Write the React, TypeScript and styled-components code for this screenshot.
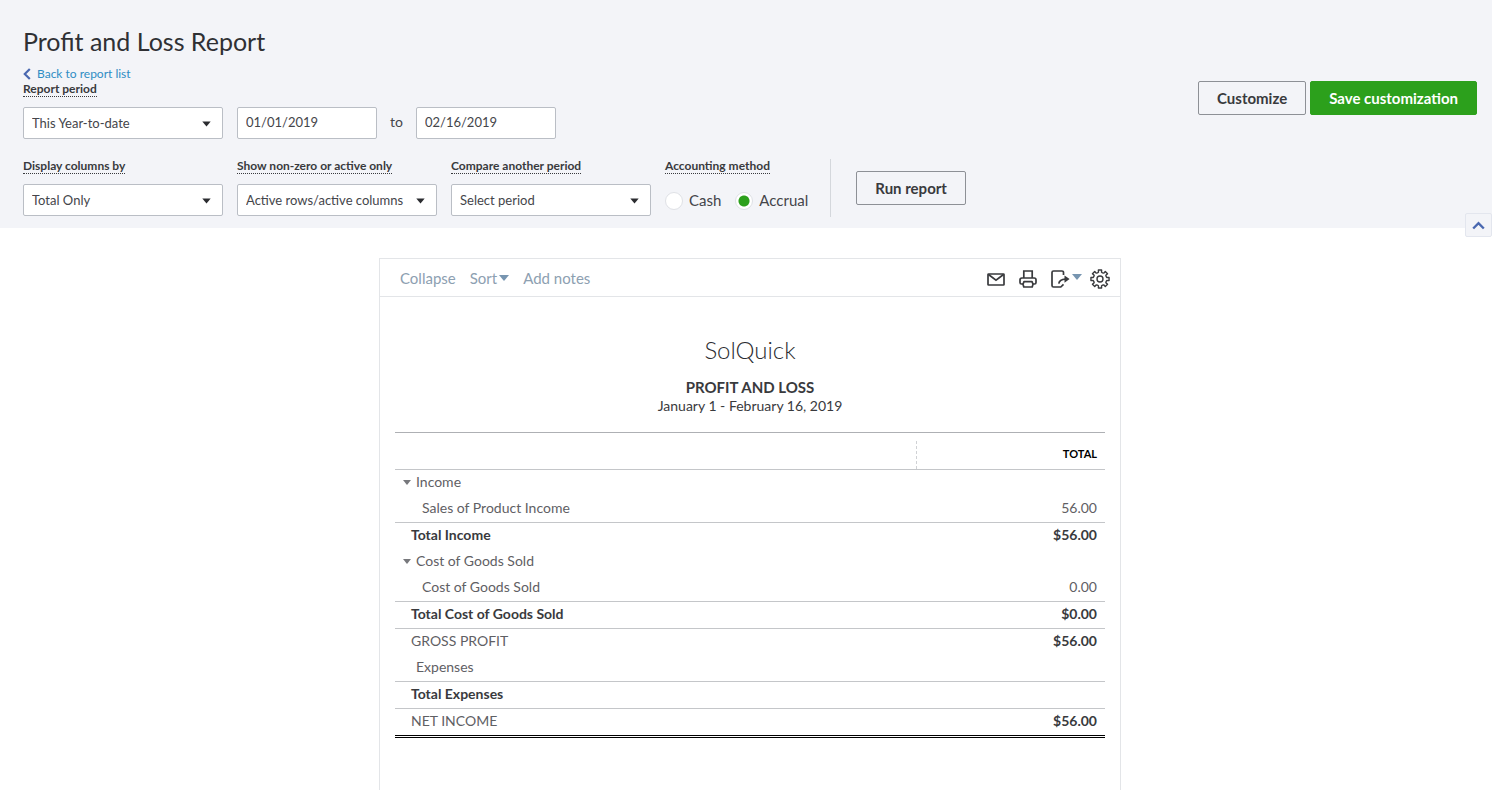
import React from 'react';
import styled, { createGlobalStyle, css } from 'styled-components';

const Global = createGlobalStyle`
  *, *::before, *::after { box-sizing: border-box; }
  body {
    margin: 0;
    background: #fff;
    color: #44454a;
    font-family: Lato, 'Open Sans', sans-serif;
    font-size: 14px;
  }
  button, input, select { font-family: inherit; color: inherit; }
  fieldset { border: 0; margin: 0; padding: 0; }
`;

const Page = styled.div`
  min-height: 100vh;
  display: flex;
  flex-direction: column;
`;

const Header = styled.header`
  position: relative;
  display: flex;
  justify-content: space-between;
  align-items: flex-start;
  padding: 25px 15px 11px 23px;
  background: #f3f4f8;
`;

const Title = styled.h1`
  margin: 0 0 9px;
  font-size: 25px;
  line-height: 32px;
  font-weight: 400;
  color: #2f3034;
`;

const BackLink = styled.a`
  display: flex;
  align-items: center;
  gap: 6px;
  width: max-content;
  height: 16px;
  font-size: 12px;
  line-height: 16px;
  color: #2f8dc4;
  text-decoration: none;
`;

const Row = styled.div`
  display: flex;
  align-items: flex-start;
  gap: 14px;
`;

const FilterRow = styled(Row)`
  margin-top: 20px;
`;

const labelText = css`
  display: block;
  width: max-content;
  padding: 0;
  margin-bottom: 10px;
  border-bottom: 1px dotted #393a3d;
  color: #393a3d;
  font-size: 12px;
  line-height: 14px;
  font-weight: 700;
`;

const Label = styled.label`
  ${labelText}
`;

const Legend = styled.legend`
  ${labelText}
`;

const SelectBox = styled.div`
  position: relative;
  width: 200px;
`;

const Select = styled.select`
  display: block;
  width: 100%;
  height: 32px;
  padding: 0 24px 0 8px;
  appearance: none;
  border: 1px solid #babec5;
  border-radius: 2px;
  background: #fff;
  font-size: 13px;
`;

const SelectArrow = styled.svg`
  position: absolute;
  top: 14px;
  right: 12px;
  pointer-events: none;
`;

const DateInput = styled.input`
  width: 140px;
  height: 32px;
  padding: 0 8px 2px;
  border: 1px solid #babec5;
  border-radius: 2px;
  background: #fff;
  font-size: 13px;
`;

const DateRange = styled.div`
  display: flex;
  align-items: center;
  gap: 13px;
  margin-top: 25px;
  line-height: 18px;
`;

const RangeWord = styled.span`
  padding-bottom: 3px;
`;

const RadioRow = styled.div`
  display: flex;
  align-items: center;
  gap: 14px;
  height: 32px;
`;

const RadioLabel = styled.label`
  display: flex;
  align-items: center;
  gap: 6px;
  font-size: 15px;
`;

const Radio = styled.input`
  appearance: none;
  width: 18px;
  height: 18px;
  margin: 2px 0 0;
  border: 1px solid #dfe1e6;
  border-radius: 50%;
  background: #fff;
  &:checked {
    background: radial-gradient(circle, #2ca01c 5px, #fff 6px);
  }
`;

const RunArea = styled.div`
  display: flex;
  align-items: center;
  height: 58px;
  margin-left: 8px;
  padding-left: 25px;
  border-left: 1px solid #d4d7dc;
`;

const Button = styled.button<{ $primary?: boolean }>`
  height: 34px;
  padding: 0 18px;
  border: 1px solid ${p => (p.$primary ? '#2ca01c' : '#8d9096')};
  border-radius: 2px;
  background: ${p => (p.$primary ? '#2ca01c' : 'transparent')};
  color: ${p => (p.$primary ? '#fff' : '#393a3d')};
  font-size: 15px;
  font-weight: 700;
  white-space: nowrap;
`;

const Actions = styled.div`
  display: flex;
  gap: 4px;
  padding-top: 56px;
`;

const HideHeader = styled.button`
  position: absolute;
  right: 0;
  bottom: -9px;
  width: 27px;
  height: 24px;
  padding: 0;
  display: grid;
  place-items: center;
  border: 1px solid #e3e6ee;
  border-radius: 2px;
  background: #f3f4f8;
`;

const Main = styled.main`
  flex: 1;
  display: flex;
  justify-content: center;
  padding: 30px 0 0 8px;
`;

const Sheet = styled.section`
  width: 100%;
  max-width: 742px;
  border: 1px solid #e3e5e8;
  border-bottom: 0;
`;

const Toolbar = styled.div`
  display: flex;
  justify-content: space-between;
  align-items: center;
  height: 38px;
  padding: 0 10px 0 20px;
  border-bottom: 1px solid #e3e5e8;
`;

const ToolGroup = styled.div<{ $gap: number }>`
  display: flex;
  align-items: center;
  gap: ${p => p.$gap}px;
`;

const TextButton = styled.button`
  display: flex;
  align-items: center;
  gap: 2px;
  padding: 0;
  border: 0;
  background: none;
  color: #8da0b1;
  font-size: 15px;
  line-height: 20px;
`;

const IconButton = styled.button`
  display: flex;
  align-items: center;
  gap: 1px;
  padding: 3px 0 0;
  border: 0;
  background: none;
  color: #393a3d;
`;

const Heading = styled.div`
  padding: 37px 0 16px;
  text-align: center;
  color: #393a3d;
`;

const Company = styled.h2`
  margin: 0 0 12px;
  font-size: 24px;
  line-height: 32px;
  font-weight: 300;
  color: #2b2c30;
`;

const ReportName = styled.h3`
  margin: 0;
  font-size: 15px;
  line-height: 18px;
  font-weight: 700;
  text-transform: uppercase;
`;

const Period = styled.p`
  margin: 0;
  font-size: 14px;
  line-height: 20px;
`;

const TableWrap = styled.div`
  padding: 0 15px;
`;

const Table = styled.table`
  width: 100%;
  border-collapse: separate;
  border-spacing: 0;
  border-top: 1px solid #aeb0b4;
  font-size: 14px;
  line-height: 18px;
`;

const HeadCell = styled.th<{ $ruled?: boolean }>`
  height: 37px;
  padding: 8px 0 0;
  border-bottom: 1px solid #c4c6c9;
  text-align: right;
  font-size: 11px;
  color: #000;
  & > span {
    display: block;
    height: 28px;
    padding: 4px 8px 0 0;
    border-left: ${p => (p.$ruled ? '1px dashed #d0d2d5' : '0')};
  }
`;

type Rule = 'none' | 'line' | 'double';

const rules: Record<Rule, string> = {
  none: '0',
  line: '1px solid #c4c6c9',
  double: '3px double #000',
};

const heights: Record<Rule, number> = { none: 26, line: 27, double: 29 };

const BodyRow = styled.tr<{ $rule: Rule }>`
  & > * {
    height: ${p => heights[p.$rule]}px;
    border-bottom: ${p => rules[p.$rule]};
  }
`;

const NameCell = styled.th<{ $indent: number; $bold?: boolean }>`
  padding: 0 0 2px ${p => p.$indent}px;
  text-align: left;
  font-weight: ${p => (p.$bold ? 700 : 400)};
  color: ${p => (p.$bold ? '#393a3d' : '#5f6064')};
`;

const AmountCell = styled.td<{ $bold?: boolean }>`
  padding: 0 8px 2px 0;
  text-align: right;
  font-weight: ${p => (p.$bold ? 700 : 400)};
  color: ${p => (p.$bold ? '#393a3d' : '#5f6064')};
`;

const Toggle = styled.button`
  display: flex;
  align-items: center;
  gap: 5px;
  padding: 0;
  border: 0;
  background: none;
  font-size: 14px;
  line-height: 18px;
`;

const Caret = ({ w = 10, h = 6, color = '#7795b0' }) => (
  <svg width={w} height={h} viewBox="0 0 10 6" preserveAspectRatio="none" aria-hidden="true">
    <path d="M0 0h10L5 6z" fill={color} />
  </svg>
);

const RaisedCaret = styled.span`
  display: flex;
  padding-bottom: 4px;
`;

const Picker = ({ id, value }: { id: string; value: string }) => (
  <SelectBox>
    <Select id={id} defaultValue={value}>
      <option>{value}</option>
    </Select>
    <SelectArrow width="9" height="6" viewBox="0 0 9 6" aria-hidden="true">
      <path d="M0.3 0.4h8.4L4.5 5.6z" fill="#2b2c30" />
    </SelectArrow>
  </SelectBox>
);

const MailIcon = () => (
  <svg width="18" height="13" viewBox="0 0 18 13" fill="none" stroke="currentColor" strokeWidth="1.7">
    <rect x="1" y="1" width="16" height="11" rx="0.6" />
    <path d="M1.5 1.500L9 7.200l7.500-5.700" />
  </svg>
);

const PrintIcon = () => (
  <svg width="18" height="18" viewBox="0 0 18 18" fill="none" stroke="currentColor" strokeWidth="1.7">
    <path d="M4.800 8V1h8.400v7" />
    <path d="M4 14H2.400A1.400 1.400 0 0 1 1 12.600V9.800A1.800 1.800 0 0 1 2.800 8h12.400A1.800 1.800 0 0 1 17 9.800v2.800a1.400 1.400 0 0 1-1.400 1.400H14" />
    <path d="M5 11.600h8l1 2.600-.8 2.800H4.800L4 14.200z" strokeLinejoin="round" />
  </svg>
);

const ExportIcon = () => (
  <svg width="20" height="18" viewBox="0 0 20 18" fill="none" stroke="currentColor" strokeWidth="1.7">
    <path d="M12.500 5V2.500A1.500 1.500 0 0 0 11 1H2.500A1.500 1.500 0 0 0 1 2.500v13A1.500 1.500 0 0 0 2.500 17h7.300l2.700-2.600" />
    <path d="M7.800 13.600c.4-2.800 2.600-4.400 6.700-4.500" />
    <path d="M13.500 5.400L18.600 9.100l-5.100 3.700z" fill="currentColor" stroke="none" />
  </svg>
);

const teeth = Array.from({ length: 8 }, (_, i) => {
  const at = (r: number, deg: number) => {
    const a = ((i * 45 + deg) * Math.PI) / 180;
    return `${(10 + r * Math.sin(a)).toFixed(2)} ${(10 - r * Math.cos(a)).toFixed(2)}`;
  };
  return `${i ? 'L' : 'M'}${at(6.9, -13)}L${at(9.2, -10)}L${at(9.2, 10)}L${at(6.9, 13)}L${at(6.6, 22.5)}`;
}).join('');

const GearIcon = () => (
  <svg width="20" height="20" viewBox="0 0 20 20" fill="none" stroke="currentColor" strokeWidth="1.4" strokeLinejoin="round">
    <path d={`${teeth}Z`} />
    <circle cx="10" cy="10" r="3" />
  </svg>
);

interface Line {
  name: string;
  amount?: string;
  indent: number;
  rule?: Rule;
  bold?: boolean;
  boldAmount?: boolean;
  toggle?: boolean;
}

const lines: Line[] = [
  { name: 'Income', indent: 8, toggle: true },
  { name: 'Sales of Product Income', amount: '56.00', indent: 27, rule: 'line' },
  { name: 'Total Income', amount: '$56.00', indent: 16, bold: true },
  { name: 'Cost of Goods Sold', indent: 8, toggle: true },
  { name: 'Cost of Goods Sold', amount: '0.00', indent: 27, rule: 'line' },
  { name: 'Total Cost of Goods Sold', amount: '$0.00', indent: 16, rule: 'line', bold: true },
  { name: 'GROSS PROFIT', amount: '$56.00', indent: 16, boldAmount: true },
  { name: 'Expenses', indent: 21, rule: 'line' },
  { name: 'Total Expenses', indent: 16, rule: 'line', bold: true },
  { name: 'NET INCOME', amount: '$56.00', indent: 16, rule: 'double', boldAmount: true },
];

export default function App() {
  return (
    <Page>
      <Global />
      <Header>
        <div>
          <Title>Profit and Loss Report</Title>
          <BackLink href="#reports">
            <svg width="8" height="12" viewBox="0 0 8 12" fill="none" stroke="#4a68b0" strokeWidth="2.200" aria-hidden="true">
              <path d="M6.800 1L1.800 6l5 5" />
            </svg>
            Back to report list
          </BackLink>
          <Row>
            <div>
              <Label htmlFor="period">Report period</Label>
              <Picker id="period" value="This Year-to-date" />
            </div>
            <DateRange>
              <DateInput type="text" aria-label="From date" defaultValue="01/01/2019" />
              <RangeWord>to</RangeWord>
              <DateInput type="text" aria-label="To date" defaultValue="02/16/2019" />
            </DateRange>
          </Row>
          <FilterRow>
            <div>
              <Label htmlFor="columns">Display columns by</Label>
              <Picker id="columns" value="Total Only" />
            </div>
            <div>
              <Label htmlFor="active">Show non-zero or active only</Label>
              <Picker id="active" value="Active rows/active columns" />
            </div>
            <div>
              <Label htmlFor="compare">Compare another period</Label>
              <Picker id="compare" value="Select period" />
            </div>
            <fieldset>
              <Legend>Accounting method</Legend>
              <RadioRow>
                <RadioLabel>
                  <Radio type="radio" name="method" />
                  Cash
                </RadioLabel>
                <RadioLabel>
                  <Radio type="radio" name="method" defaultChecked />
                  Accrual
                </RadioLabel>
              </RadioRow>
            </fieldset>
            <RunArea>
              <Button type="button">Run report</Button>
            </RunArea>
          </FilterRow>
        </div>
        <Actions>
          <Button type="button">Customize</Button>
          <Button type="button" $primary>Save customization</Button>
        </Actions>
        <HideHeader type="button" aria-label="Hide header">
          <svg width="13" height="9" viewBox="0 0 13 9" fill="none" stroke="#4a68b0" strokeWidth="2.400">
            <path d="M1.200 7.500l5.300-5.300 5.300 5.300" />
          </svg>
        </HideHeader>
      </Header>
      <Main>
        <Sheet>
          <Toolbar>
            <ToolGroup $gap={14}>
              <TextButton type="button">Collapse</TextButton>
              <TextButton type="button">Sort<Caret /></TextButton>
              <TextButton type="button">Add notes</TextButton>
            </ToolGroup>
            <ToolGroup $gap={8}>
              <ToolGroup $gap={14}>
                <IconButton type="button" aria-label="Email"><MailIcon /></IconButton>
                <IconButton type="button" aria-label="Print"><PrintIcon /></IconButton>
                <IconButton type="button" aria-label="Export">
                  <ExportIcon />
                  <RaisedCaret><Caret /></RaisedCaret>
                </IconButton>
              </ToolGroup>
              <IconButton type="button" aria-label="Settings"><GearIcon /></IconButton>
            </ToolGroup>
          </Toolbar>
          <Heading>
            <Company>SolQuick</Company>
            <ReportName>Profit and Loss</ReportName>
            <Period>January 1 - February 16, 2019</Period>
          </Heading>
          <TableWrap>
            <Table>
              <colgroup>
                <col />
                <col width="189" />
              </colgroup>
              <thead>
                <tr>
                  <HeadCell scope="col" aria-label="Account" />
                  <HeadCell scope="col" $ruled><span>TOTAL</span></HeadCell>
                </tr>
              </thead>
              <tbody>
                {lines.map((l, i) => (
                  <BodyRow key={i} $rule={l.rule ?? 'none'}>
                    <NameCell scope="row" $indent={l.indent} $bold={l.bold}>
                      {l.toggle ? (
                        <Toggle type="button"><Caret w={8} h={5} color="#77787c" />{l.name}</Toggle>
                      ) : l.name}
                    </NameCell>
                    <AmountCell $bold={l.bold || l.boldAmount}>{l.amount}</AmountCell>
                  </BodyRow>
                ))}
              </tbody>
            </Table>
          </TableWrap>
        </Sheet>
      </Main>
    </Page>
  );
}
